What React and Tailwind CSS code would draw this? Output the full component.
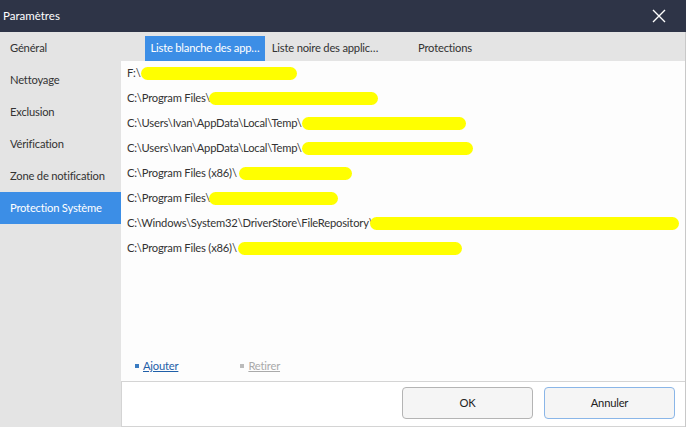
import React from "react";

const sideItems = ["Général", "Nettoyage", "Exclusion", "Vérification", "Zone de notification", "Protection Système"];

const tabs = ["Liste blanche des app…", "Liste noire des applic…", "Protections"];

// path text, room it takes before the yellow mask, mask width
const rows = [
    {path: "F:\\", lead: 14, mask: 156},
    {path: "C:\\Program Files\\", lead: 82, mask: 169},
    {path: "C:\\Users\\Ivan\\AppData\\Local\\Temp\\", lead: 175, mask: 164},
    {path: "C:\\Users\\Ivan\\AppData\\Local\\Temp\\", lead: 175, mask: 171},
    {path: "C:\\Program Files (x86)\\", lead: 112, mask: 113},
    {path: "C:\\Program Files\\", lead: 82, mask: 129},
    {path: "C:\\Windows\\System32\\DriverStore\\FileRepository\\", lead: 243, mask: 309},
    {path: "C:\\Program Files (x86)\\", lead: 111, mask: 224},
];

export default function App() {
    return (
        <div className="w-[686px] h-[427px] flex flex-col overflow-hidden text-[11.2px] tracking-[-0.2px] text-[#222]"
             style={{fontFamily: 'Lato, "Liberation Sans", sans-serif'}}>
            {/* title bar */}
            <div className="h-[32px] bg-[#2e3447] flex items-center justify-between pl-[3px] pr-[20px] shrink-0">
                <span className="text-white text-[11.5px] tracking-normal">Paramètres</span>
                <svg width="14" height="14" viewBox="0 0 14 14">
                    <path d="M1 1L13 13M13 1L1 13" stroke="#fff" strokeWidth="1.4"/>
                </svg>
            </div>

            <div className="flex flex-1 bg-[#e4e4e4] min-h-0">
                {/* sidebar */}
                <div className="w-[121px] flex flex-col shrink-0">
                    {sideItems.map((s, i) => (
                        <div key={s}
                             className={"h-[32px] flex items-center pl-[10px] whitespace-nowrap " + (i === 5 ? "bg-[#3c8ee6] text-white" : "text-[#333]")}>
                            {s}
                        </div>
                    ))}
                </div>

                <div className="flex-1 min-w-0 flex flex-col border-r border-[#c8c8c8]">
                    {/* tabs */}
                    <div className="h-[29px] flex items-end pl-[24px] shrink-0">
                        {tabs.map((t, i) => (
                            <div key={t}
                                 className={"w-[120px] h-[25px] flex items-center justify-center whitespace-nowrap " + (i === 0 ? "bg-[#3c8ee6] text-white" : "text-[#333]")}>
                                {t}
                            </div>
                        ))}
                    </div>

                    {/* list */}
                    <div className="flex-1 min-h-0 bg-[#fdfdfd] flex flex-col overflow-hidden">
                        <div className="flex-1 flex flex-col">
                            {rows.map((r, i) => (
                                <div key={i} className="h-[25px] flex items-center pl-[6px] whitespace-nowrap">
                                    <span className="text-[#333] shrink-0" style={{width: r.lead}}>{r.path}</span>
                                    <span className="h-[13px] bg-[#ffff00] rounded-full shrink-0" style={{width: r.mask}}/>
                                </div>
                            ))}
                        </div>
                        <div className="h-[33px] flex items-start pl-[14px] pt-[10px] gap-[62px] shrink-0">
                            <div className="flex items-center gap-[4px]">
                                <span className="w-[4px] h-[4px] bg-[#3a7cc2]"/>
                                <span className="text-[#1f5fa8] underline">Ajouter</span>
                            </div>
                            <div className="flex items-center gap-[4px]">
                                <span className="w-[4px] h-[4px] bg-[#bbb]"/>
                                <span className="text-[#aaa] underline">Retirer</span>
                            </div>
                        </div>
                    </div>

                    {/* footer */}
                    <div className="h-[46px] shrink-0 bg-white border-t border-l border-b border-[#d4d4d4] flex items-start justify-end gap-[11px] pt-[5px] pr-[10px]">
                        <button className="w-[131px] h-[32px] rounded-[4px] border border-[#b4b4b4] bg-[#f5f5f5] text-[#222]">OK</button>
                        <button className="w-[131px] h-[32px] rounded-[4px] border border-[#8ab6e8] bg-[#f5f5f5] text-[#222]">Annuler</button>
                    </div>
                </div>
            </div>
        </div>
    );
}
